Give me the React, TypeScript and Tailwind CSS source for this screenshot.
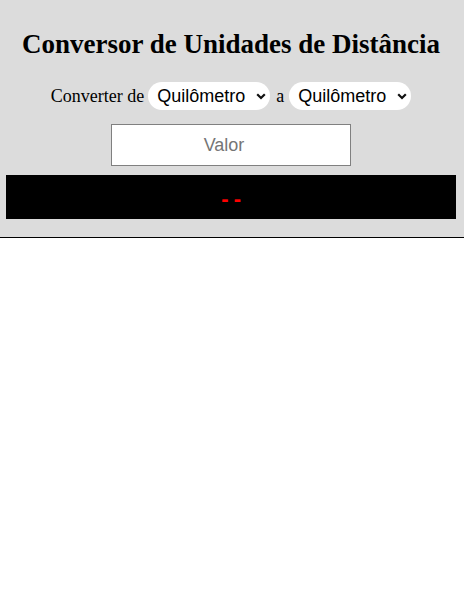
import React from "react";

function Sel() {
  return (
    <div className="relative w-[122px] h-[28px]">
      <select
        defaultValue="km"
        className="appearance-none w-full h-full bg-white rounded-[14px] pl-[9px] text-[18px] text-black outline-none"
        style={{ fontFamily: '"Liberation Sans", Arial, sans-serif' }}
      >
        <option value="km">Quilômetro</option>
        <option value="m">Metro</option>
        <option value="cm">Centímetro</option>
      </select>
      <svg
        className="absolute right-[4px] top-[11px] pointer-events-none"
        width="10"
        height="7"
        viewBox="0 0 10 7"
      >
        <path d="M1.2 1.2 L5 5 L8.8 1.2" stroke="#111" strokeWidth="2.2" fill="none" />
      </svg>
    </div>
  );
}

export default function App() {
  return (
    <div className="w-[464px] min-h-[611px] bg-white">
      <div className="bg-[#dcdcdc] border-b border-black pt-[29px] pb-[18px] pl-[6px] pr-[8px] flex flex-col items-center">
        <h1
          className="text-[27px] font-bold leading-[30px] text-black whitespace-nowrap"
          style={{ fontFamily: '"Liberation Serif", "Times New Roman", serif' }}
        >
          Conversor de Unidades de Distância
        </h1>
        <div
          className="mt-[23px] flex items-center text-[18px] text-black"
          style={{ fontFamily: '"Liberation Serif", "Times New Roman", serif' }}
        >
          <span className="mr-[4px]">Converter de</span>
          <Sel />
          <span className="ml-[6px] mr-[5px]">a</span>
          <Sel />
        </div>
        <input
          placeholder="Valor"
          className="mt-[14px] w-[240px] h-[42px] bg-white border border-[#808080] text-center text-[18px] pr-[14px] placeholder:text-[#757575] outline-none"
          style={{ fontFamily: '"Liberation Sans", Arial, sans-serif' }}
        />
        <div
          className="mt-[9px] w-full h-[44px] bg-black flex items-center justify-center text-[#ff0000] text-[22px] font-bold pt-[3px] tracking-[-0.5px]"
          style={{ fontFamily: '"Liberation Sans", Arial, sans-serif' }}
        >
          - -
        </div>
      </div>
    </div>
  );
}
